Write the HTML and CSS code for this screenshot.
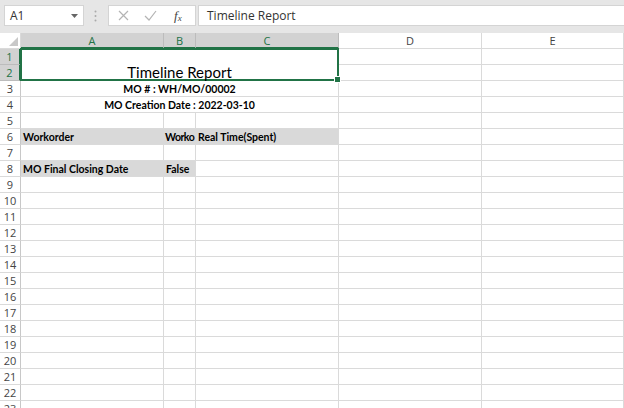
FILE: index.html
```html
<!DOCTYPE html>
<html>
<head>
<meta charset="utf-8">
<link rel="stylesheet" href="styles.css">
</head>
<body>
<div class="app">
  <div class="toolbar">
    <div class="namebox">
      <span class="name">A1</span>
      <svg class="arrow" width="7" height="4" viewBox="0 0 7 4"><path d="M0 0h7L3.5 4z" fill="#666"/></svg>
    </div>
    <svg class="dots" width="3" height="12" viewBox="0 0 3 12"><circle cx="1.5" cy="1.5" r="1" fill="#aaa"/><circle cx="1.5" cy="6" r="1" fill="#aaa"/><circle cx="1.5" cy="10.5" r="1" fill="#aaa"/></svg>
    <div class="fxbox">
      <svg class="ico" width="11" height="11" viewBox="0 0 11 11"><path d="M1 1l9 9M10 1l-9 9" stroke="#b4b4b4" stroke-width="1.2" fill="none"/></svg>
      <svg class="ico" width="13" height="11" viewBox="0 0 13 11"><path d="M1 6l4 4 7-9" stroke="#b4b4b4" stroke-width="1.2" fill="none"/></svg>
      <span class="fx">f<sub>x</sub></span>
    </div>
    <div class="formula">Timeline Report</div>
  </div>
  <div class="sheet">
    <div class="corner"><svg width="9" height="9" viewBox="0 0 9 9"><path d="M9 0v9H0z" fill="#c8c8c8"/></svg></div>
    <div class="ch sel">A</div><div class="ch sel">B</div><div class="ch sel">C</div><div class="ch">D</div><div class="ch">E</div>

    <div class="rh sel">1</div>
    <div class="merged"><span class="title">Timeline Report</span><span class="handle"></span></div>
    <div class="c"></div><div class="c"></div>
    <div class="rh sel">2</div><div class="c"></div><div class="c"></div>

    <div class="rh">3</div><div class="c span3 center b">MO # : WH/MO/00002</div><div class="c"></div><div class="c"></div>
    <div class="rh">4</div><div class="c span3 center b">MO Creation Date : 2022-03-10</div><div class="c"></div><div class="c"></div>
    <div class="rh">5</div><div class="c"></div><div class="c"></div><div class="c"></div><div class="c"></div><div class="c"></div>
    <div class="rh">6</div><div class="c fill fl b">Workorder</div><div class="c fill fl b tight">Worko</div><div class="c fill b">Real Time(Spent)</div><div class="c"></div><div class="c"></div>
    <div class="rh">7</div><div class="c"></div><div class="c"></div><div class="c"></div><div class="c"></div><div class="c"></div>
    <div class="rh">8</div><div class="c fill fl b">MO Final Closing Date</div><div class="c fill b">False</div><div class="c"></div><div class="c"></div><div class="c"></div>
    <div class="rh">9</div><div class="c"></div><div class="c"></div><div class="c"></div><div class="c"></div><div class="c"></div>
    <div class="rh">10</div><div class="c"></div><div class="c"></div><div class="c"></div><div class="c"></div><div class="c"></div>
    <div class="rh">11</div><div class="c"></div><div class="c"></div><div class="c"></div><div class="c"></div><div class="c"></div>
    <div class="rh">12</div><div class="c"></div><div class="c"></div><div class="c"></div><div class="c"></div><div class="c"></div>
    <div class="rh">13</div><div class="c"></div><div class="c"></div><div class="c"></div><div class="c"></div><div class="c"></div>
    <div class="rh">14</div><div class="c"></div><div class="c"></div><div class="c"></div><div class="c"></div><div class="c"></div>
    <div class="rh">15</div><div class="c"></div><div class="c"></div><div class="c"></div><div class="c"></div><div class="c"></div>
    <div class="rh">16</div><div class="c"></div><div class="c"></div><div class="c"></div><div class="c"></div><div class="c"></div>
    <div class="rh">17</div><div class="c"></div><div class="c"></div><div class="c"></div><div class="c"></div><div class="c"></div>
    <div class="rh">18</div><div class="c"></div><div class="c"></div><div class="c"></div><div class="c"></div><div class="c"></div>
    <div class="rh">19</div><div class="c"></div><div class="c"></div><div class="c"></div><div class="c"></div><div class="c"></div>
    <div class="rh">20</div><div class="c"></div><div class="c"></div><div class="c"></div><div class="c"></div><div class="c"></div>
    <div class="rh">21</div><div class="c"></div><div class="c"></div><div class="c"></div><div class="c"></div><div class="c"></div>
    <div class="rh">22</div><div class="c"></div><div class="c"></div><div class="c"></div><div class="c"></div><div class="c"></div>
    <div class="rh">23</div><div class="c"></div><div class="c"></div><div class="c"></div><div class="c"></div><div class="c"></div>
  </div>
</div>
</body>
</html>
```
FILE: styles.css
```css
html, body {
  margin: 0;
  padding: 0;
  background: #ffffff;
}
.app {
  width: 624px;
  height: 408px;
  overflow: hidden;
  font-family: Lato, "Noto Sans", sans-serif;
}
.toolbar {
  height: 33px;
  box-sizing: border-box;
  background: #e6e6e6;
  display: flex;
  align-items: flex-start;
  padding: 5px 0 0 4px;
  font-family: "Open Sans", "Noto Sans", sans-serif;
  font-size: 12px;
  color: #333;
}
.namebox {
  width: 80px;
  height: 21px;
  box-sizing: border-box;
  background: #fff;
  border: 1px solid #d4d4d4;
  display: flex;
  align-items: center;
  padding: 0 5px 0 5px;
}
.name { flex: 1; }
.dots {
  margin: 5px 11px 0 10px;
}
.fxbox {
  width: 88px;
  height: 21px;
  box-sizing: border-box;
  background: #fff;
  border: 1px solid #d4d4d4;
  display: flex;
  align-items: center;
  padding: 0 0 0 9px;
  gap: 15px;
}
.ico { display: block; }
.fx {
  font-family: "Liberation Serif", serif;
  font-style: italic;
  font-size: 13px;
  color: #444;
  margin-left: 2px;
}
.fx sub { font-size: 9px; vertical-align: -1px; }
.formula {
  flex: 1;
  height: 21px;
  box-sizing: border-box;
  margin-left: 2px;
  background: #fff;
  border-top: 1px solid #d4d4d4;
  border-bottom: 1px solid #d4d4d4;
  border-left: 1px solid #d4d4d4;
  padding: 0 0 0 8px;
  line-height: 19px;
}
.sheet {
  display: grid;
  grid-template-columns: 21px 143px 32px 143px 143px 1fr;
  grid-template-rows: 16px;
  grid-auto-rows: 16px;
  font-size: 10.5px;
  color: #000;
}
.sheet > div {
  box-sizing: border-box;
  border-right: 1px solid #dadada;
  border-bottom: 1px solid #dadada;
  white-space: nowrap;
  overflow: hidden;
}
.corner {
  display: flex;
  align-items: flex-end;
  justify-content: flex-end;
  padding: 0 2px 2px 0;
  background: #fff;
}
.corner svg { display: block; }
.ch {
  text-align: center;
  line-height: 15px;
  font-family: "Open Sans", "Noto Sans", sans-serif;
  font-size: 11px;
  color: #444;
  background: #fff;
}
.ch.sel {
  background: #d2d2d2;
  color: #217346;
  border-bottom: 2px solid #217346 !important;
  border-right-color: #bcbcbc !important;
}
.rh {
  text-align: center;
  line-height: 16px;
  font-family: "Open Sans", "Noto Sans", sans-serif;
  font-size: 11px;
  color: #444;
  background: #fff;
  border-right-color: #c8c8c8 !important;
}
.rh.sel {
  background: #d2d2d2;
  color: #217346;
  border-right: 2px solid #217346 !important;
  border-bottom-color: #bcbcbc !important;
}
.c {
  line-height: 15px;
  padding-top: 1px;
  padding-left: 2px;
}
.merged {
  grid-column: 2 / 5;
  grid-row: 2 / 4;
  position: relative;
  overflow: visible !important;
  border: 2px solid #217346 !important;
  margin: -1px 0 0 -1px;
  display: flex;
  align-items: flex-end;
  justify-content: center;
}
.title {
  font-size: 15px;
  line-height: 14px;
  padding-bottom: 0;
}
.handle {
  position: absolute;
  right: -4px;
  bottom: -4px;
  width: 5px;
  height: 5px;
  background: #217346;
  border: 1px solid #fff;
}
.span3 {
  grid-column: span 3;
}
.center { text-align: center; padding-left: 0; }
.b { font-weight: bold; }
.tight { padding-left: 1px; letter-spacing: -0.5px; }
.fill { background: #d9d9d9; }
.fl { border-right-color: #d9d9d9 !important; }
```
